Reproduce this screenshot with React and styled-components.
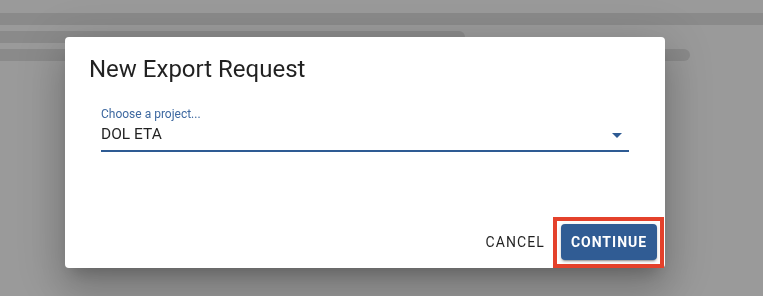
import styled, { createGlobalStyle } from 'styled-components'

const GlobalStyle = createGlobalStyle`
  html, body {
    margin: 0;
    padding: 0;
    background: #9a9a9a;
    font-family: Roboto, "Liberation Sans", Arial, sans-serif;
  }
`

// page behind the backdrop (skeleton bars)
const PageStyled = styled.div`
  width: 763px;
  height: 296px;
  overflow: hidden;
  background: #9a9a9a;
  padding-top: 13px;
  box-sizing: border-box;
  display: flex;
  flex-direction: column;
  gap: 6px;
`

const BarStyled = styled.div`
  height: 12px;
  width: ${(p) => p.$width};
  background: #8a8a8a;
  border-radius: ${(p) => (p.$round ? '0 6px 6px 0' : '0')};
`

const DialogStyled = styled.div`
  position: fixed;
  left: 65px;
  top: 37px;
  width: 600px;
  height: 231px;
  background: #ffffff;
  border-radius: 4px;
  box-shadow: 0px 11px 15px -7px rgba(0, 0, 0, 0.2),
    0px 24px 38px 3px rgba(0, 0, 0, 0.14), 0px 9px 46px 8px rgba(0, 0, 0, 0.12);
  display: flex;
  flex-direction: column;
  box-sizing: border-box;
`

const TitleStyled = styled.h2`
  margin: 0;
  padding: 16px 24px;
  font-size: 24px;
  line-height: 32px;
  font-weight: 400;
  color: rgba(0, 0, 0, 0.87);
`

const ContentStyled = styled.div`
  padding: 7px 36px 0;
`

const LabelStyled = styled.label`
  display: block;
  font-size: 12px;
  line-height: 12px;
  color: #3d68a0;
`

const SelectStyled = styled.div`
  margin-top: 4px;
  display: flex;
  align-items: center;
  justify-content: space-between;
  height: 20px;
  padding: 0 7px 6px 0;
  border-bottom: 2px solid #2e5b93;
  font-size: 15.5px;
  line-height: 20px;
  color: rgba(0, 0, 0, 0.87);
`

const ArrowStyled = styled.span`
  width: 0;
  height: 0;
  border-left: 5px solid transparent;
  border-right: 5px solid transparent;
  border-top: 5px solid #2e5b93;
  margin-top: 2px;
`

const ActionsStyled = styled.div`
  margin-top: auto;
  padding: 8px;
  display: flex;
  justify-content: flex-end;
  align-items: center;
  gap: 8px;
`

const TextButtonStyled = styled.button`
  border: none;
  background: transparent;
  padding: 6px 8px;
  height: 36px;
  font-family: inherit;
  font-size: 14px;
  font-weight: 400;
  letter-spacing: 1.1px;
  color: rgba(0, 0, 0, 0.87);
  cursor: pointer;
`

const HighlightStyled = styled.div`
  position: relative;
  &::after {
    content: '';
    position: absolute;
    left: -8px;
    right: -7px;
    top: -7px;
    bottom: -8px;
    border: 4px solid #e4412b;
    pointer-events: none;
  }
`

const ContainedButtonStyled = styled.button`
  border: none;
  border-radius: 4px;
  background: #305c94;
  color: #ffffff;
  width: 96px;
  height: 36px;
  padding: 0;
  font-family: inherit;
  font-size: 14px;
  font-weight: 700;
  letter-spacing: 1px;
  box-shadow: 0px 3px 1px -2px rgba(0, 0, 0, 0.2),
    0px 2px 2px 0px rgba(0, 0, 0, 0.14), 0px 1px 5px 0px rgba(0, 0, 0, 0.12);
  cursor: pointer;
  display: block;
`

function App() {
  return (
    <>
      <GlobalStyle />
      <PageStyled>
        <BarStyled $width="100%" />
        <BarStyled $width="465px" $round />
        <BarStyled $width="690px" $round />
      </PageStyled>
      <DialogStyled>
        <TitleStyled>New Export Request</TitleStyled>
        <ContentStyled>
          <LabelStyled>Choose a project...</LabelStyled>
          <SelectStyled>
            <span>DOL ETA</span>
            <ArrowStyled />
          </SelectStyled>
        </ContentStyled>
        <ActionsStyled>
          <TextButtonStyled>CANCEL</TextButtonStyled>
          <HighlightStyled>
            <ContainedButtonStyled>CONTINUE</ContainedButtonStyled>
          </HighlightStyled>
        </ActionsStyled>
      </DialogStyled>
    </>
  )
}
export default App
